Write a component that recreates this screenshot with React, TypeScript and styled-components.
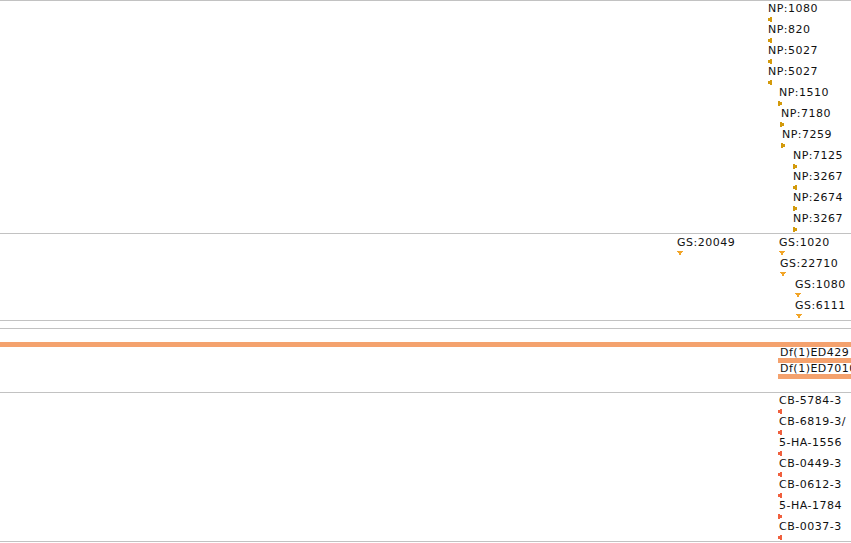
import React from "react";
import styled, { createGlobalStyle } from "styled-components";

type Dir = "left" | "right" | "down";

interface Feature {
  label?: string;
  x: number;
  tx?: number;
  dir: Dir;
}

const GlobalStyle = createGlobalStyle`
  html, body {
    margin: 0;
    padding: 0;
    background: #ffffff;
    overflow: hidden;
  }
`;

const Viewer = styled.div`
  width: 851px;
  height: 543px;
  overflow: hidden;
  background: #ffffff;
  font-family: "DejaVu Sans", Verdana, sans-serif;
  font-size: 11px;
  color: #111;
  display: flex;
  flex-direction: column;
  border-top: 1px solid #c2c2c2;
  box-sizing: border-box;
`;

const Track = styled.div<{ $height: number; $pad?: number }>`
  position: relative;
  height: ${(p) => p.$height}px;
  padding-top: ${(p) => p.$pad ?? 0}px;
  box-sizing: border-box;
  border-bottom: 1px solid #c2c2c2;
  flex: none;
  overflow: hidden;
`;

const Row = styled.div<{ $height: number }>`
  position: relative;
  height: ${(p) => p.$height}px;
`;

const Item = styled.div`
  position: absolute;
  top: 0;
  white-space: nowrap;
`;

const Label = styled.div`
  padding-top: 1px;
  line-height: 13px;
  height: 14px;
  letter-spacing: 0.5px;
`;

const ArrowBox = styled.svg<{ $offset: number }>`
  display: block;
  margin-top: 1px;
  margin-left: ${(p) => p.$offset}px;
  shape-rendering: crispEdges;
`;

const Bar = styled.div<{ $color: string }>`
  position: absolute;
  right: 0;
  height: 5px;
  background: ${(p) => p.$color};
`;

const BarLabel = styled.div`
  position: absolute;
  top: 0;
  line-height: 13px;
  letter-spacing: 0.5px;
  white-space: nowrap;
`;

const Arrow = ({ dir, color, offset }: { dir: Dir; color: string; offset: number }) => {
  if (dir === "down") {
    return (
      <ArrowBox $offset={offset} width="6" height="4" viewBox="0 0 6 4">
        <rect x="0" y="0" width="6" height="1" fill={color} />
        <rect x="1" y="1" width="4" height="1" fill={color} />
        <rect x="2" y="2" width="2" height="2" fill={color} />
      </ArrowBox>
    );
  }
  if (dir === "left") {
    return (
      <ArrowBox $offset={offset} width="4" height="5" viewBox="0 0 4 5">
        <rect x="2" y="0" width="2" height="5" fill={color} />
        <rect x="0" y="1" width="2" height="3" fill={color} />
      </ArrowBox>
    );
  }
  return (
    <ArrowBox $offset={offset} width="4" height="5" viewBox="0 0 4 5">
      <rect x="0" y="0" width="2" height="5" fill={color} />
      <rect x="2" y="1" width="2" height="3" fill={color} />
    </ArrowBox>
  );
};

const npRows: Feature[][] = [
  [{ label: "NP:1080", x: 768, tx: 768, dir: "left" }],
  [{ label: "NP:820", x: 768, tx: 768, dir: "left" }],
  [{ label: "NP:5027", x: 768, tx: 768, dir: "left" }],
  [{ label: "NP:5027", x: 768, tx: 768, dir: "left" }],
  [{ label: "NP:1510", x: 779, tx: 778, dir: "right" }],
  [{ label: "NP:7180", x: 781, tx: 780, dir: "right" }],
  [{ label: "NP:7259", x: 782, tx: 781, dir: "right" }],
  [{ label: "NP:7125", x: 793, tx: 793, dir: "right" }],
  [{ label: "NP:3267", x: 793, tx: 793, dir: "left" }],
  [{ label: "NP:2674", x: 793, tx: 793, dir: "right" }],
  [{ label: "NP:3267", x: 793, tx: 793, dir: "right" }],
];

const gsRows: Feature[][] = [
  [
    { label: "GS:20049", x: 677, tx: 677, dir: "down" },
    { label: "GS:1020", x: 779, tx: 779, dir: "down" },
  ],
  [{ label: "GS:22710", x: 780, tx: 780, dir: "down" }],
  [{ label: "GS:1080", x: 795, tx: 795, dir: "down" }],
  [{ label: "GS:6111", x: 795, tx: 796, dir: "down" }],
];

const cbRows: Feature[][] = [
  [{ label: "CB-5784-3", x: 779, tx: 778, dir: "left" }],
  [{ label: "CB-6819-3/", x: 779, tx: 778, dir: "left" }],
  [{ label: "5-HA-1556", x: 779, tx: 778, dir: "left" }],
  [{ label: "CB-0449-3", x: 779, tx: 778, dir: "left" }],
  [{ label: "CB-0612-3", x: 779, tx: 778, dir: "left" }],
  [{ label: "5-HA-1784", x: 779, tx: 778, dir: "right" }],
  [{ label: "CB-0037-3", x: 779, tx: 778, dir: "left" }],
];

const deficiencies = [
  { label: "", start: 0, top: 11 },
  { label: "Df(1)ED429", start: 778, top: 27 },
  { label: "Df(1)ED7010", start: 778, top: 43 },
];

const GlyphTrack = ({
  rows,
  color,
  height,
  pad,
}: {
  rows: Feature[][];
  color: string;
  height: number;
  pad?: number;
}) => (
  <Track $height={height} $pad={pad}>
    {rows.map((row, i) => (
      <Row key={i} $height={21}>
        {row.map((f, j) => (
          <Item key={j} style={{ left: f.x }}>
            <Label>{f.label}</Label>
            <Arrow dir={f.dir} color={color} offset={(f.tx ?? f.x) - f.x} />
          </Item>
        ))}
      </Row>
    ))}
  </Track>
);

export default function App() {
  return (
    <Viewer>
      <GlobalStyle />
      <GlyphTrack rows={npRows} color="#d39a0c" height={233} />
      <GlyphTrack rows={gsRows} color="#f2a528" height={87} pad={1} />
      <Track $height={8} />
      <Track $height={64}>
        {deficiencies.map((d, i) => (
          <React.Fragment key={i}>
            {d.label && (
              <BarLabel style={{ left: d.start + 2, top: d.top - 10 }}>{d.label}</BarLabel>
            )}
            <Bar $color="#f4a26e" style={{ left: d.start, top: d.top + 2 }} />
          </React.Fragment>
        ))}
      </Track>
      <GlyphTrack rows={cbRows} color="#f0603e" height={149} />
    </Viewer>
  );
}
